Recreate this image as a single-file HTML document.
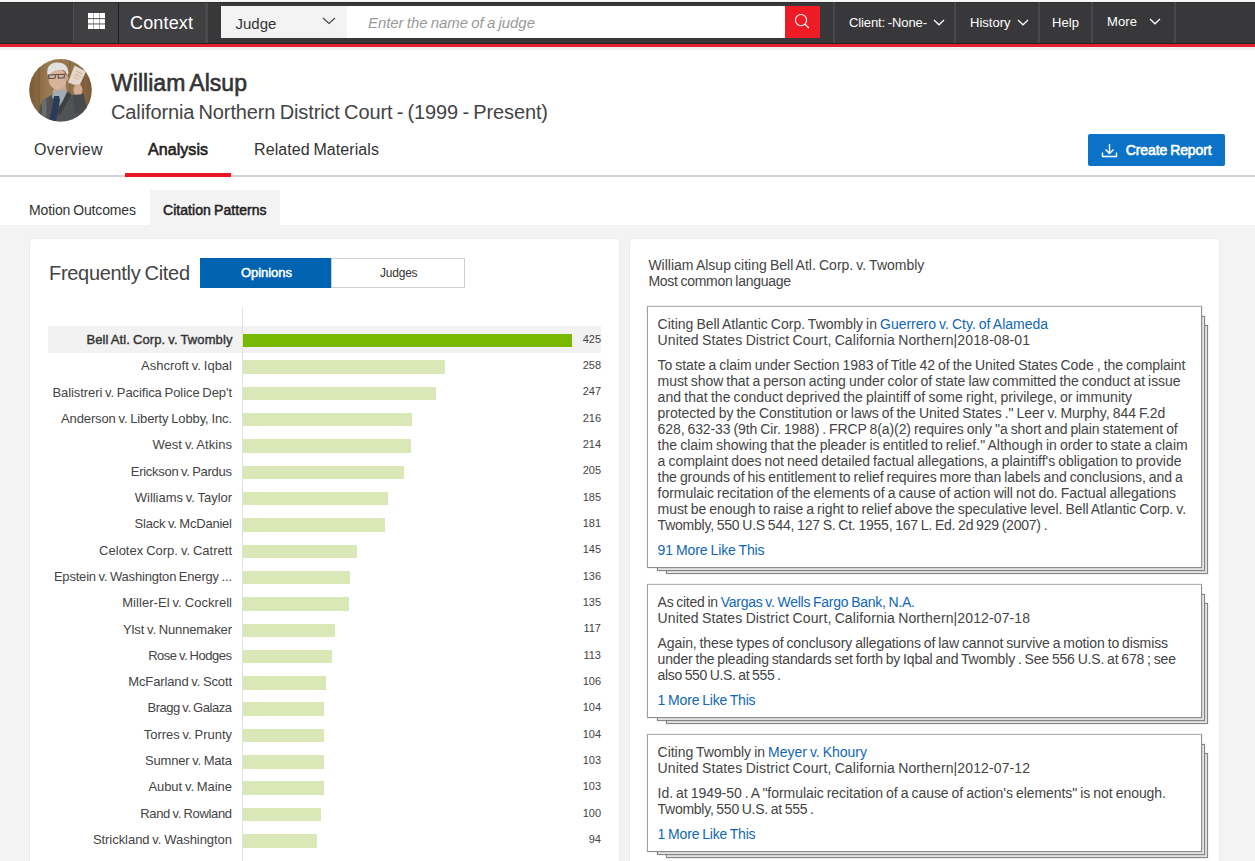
<!DOCTYPE html>
<html><head><meta charset="utf-8">
<style>
html,body{margin:0;padding:0;}
body{width:1255px;height:861px;overflow:hidden;position:relative;background:#fff;font-family:"Liberation Sans",sans-serif;}
.a{position:absolute;}
.t{position:absolute;white-space:nowrap;}
.bar{position:absolute;left:243px;height:13.5px;}
.sep{position:absolute;top:2px;width:2px;height:41px;background:#48484a;}
.card{position:absolute;background:#fff;border:1px solid #ebebeb;border-radius:4px;}
.cc{position:absolute;background:#fff;border:1px solid #8e8e8e;border-top-color:#b0b0b0;border-left-color:#a0a0a0;box-shadow:0 0 1px rgba(0,0,0,.3);}
.ly{position:absolute;background:#e2e2e2;border:1px solid #858585;box-shadow:0 0 1px rgba(0,0,0,.3);}
</style></head><body>
<!-- header -->
<div class="a" style="left:0;top:0;width:1255px;height:2px;background:#f6f6f6"></div>
<div class="a" style="left:0;top:2px;width:1255px;height:41px;background:#38383a"></div>
<div class="a" style="left:0;top:43px;width:1255px;height:1px;background:#222526"></div>
<div class="a" style="left:0;top:44px;width:1255px;height:3px;background:#e5202e"></div>
<div class="a" style="left:0;top:47px;width:1255px;height:3px;background:#f1f2f2"></div>
<div class="a" style="left:73px;top:2px;width:45px;height:41px;background:#404042;border-left:1px solid #4d4d4f"></div>
<div class="a" style="left:118px;top:2px;width:1px;height:41px;background:#1e1e1e"></div>
<div class="a" style="left:119px;top:2px;width:86px;height:41px;background:#404042"></div>
<div class="a" style="left:205px;top:2px;width:3px;height:41px;background:#4a4a4c"></div>
<div class="a" style="left:0;top:2px;width:1255px;height:1px;background:#2e2e30"></div>
<!-- grid icon -->
<svg class="a" style="left:88px;top:13px" width="17" height="16" viewBox="0 0 17 16">
<rect x="0" y="0" width="17" height="16" fill="#fff"/>
<rect x="5.3" y="0" width="0.6" height="16" fill="#404042" opacity=".7"/>
<rect x="11.1" y="0" width="0.6" height="16" fill="#404042" opacity=".7"/>
<rect x="0" y="5.2" width="17" height="0.9" fill="#404042"/>
<rect x="0" y="10.5" width="17" height="0.9" fill="#404042"/>
</svg>
<!-- select -->
<div class="a" style="left:221px;top:6px;width:126px;height:32px;background:#f3f3f3"></div>
<svg class="a" style="left:322px;top:17px" width="14" height="8" viewBox="0 0 14 8"><polyline points="1,1 7,6.5 13,1" fill="none" stroke="#444" stroke-width="1.1"/></svg>
<div class="a" style="left:347px;top:6px;width:438px;height:32px;background:#fff"></div>
<div class="a" style="left:785px;top:6px;width:35px;height:32px;background:#ec1b24"></div>
<svg class="a" style="left:793px;top:13px" width="18" height="18" viewBox="0 0 18 18"><circle cx="8" cy="7.1" r="5.6" fill="none" stroke="#fff" stroke-width="1.15"/><line x1="12" y1="11.1" x2="15.8" y2="15" stroke="#fff" stroke-width="1.2"/></svg>
<div class="sep" style="left:833px"></div>
<div class="sep" style="left:954px"></div>
<div class="sep" style="left:1038px"></div>
<div class="sep" style="left:1091px"></div>
<div class="sep" style="left:1174px"></div>
<svg class="a" style="left:933px;top:19px" width="12" height="7" viewBox="0 0 12 7"><polyline points="1,1 6,5.8 11,1" fill="none" stroke="#fff" stroke-width="1.2"/></svg>
<svg class="a" style="left:1017px;top:19px" width="12" height="7" viewBox="0 0 12 7"><polyline points="1,1 6,5.8 11,1" fill="none" stroke="#fff" stroke-width="1.2"/></svg>
<svg class="a" style="left:1149px;top:18px" width="12" height="7" viewBox="0 0 12 7"><polyline points="1,1 6,5.8 11,1" fill="none" stroke="#fff" stroke-width="1.2"/></svg>

<!-- profile photo -->
<svg class="a" style="left:29px;top:59px" width="63" height="63" viewBox="0 0 63 63">
<defs><clipPath id="cp"><circle cx="31.5" cy="31.3" r="31.3"/></clipPath>
<linearGradient id="bg" x1="0" y1="0" x2="1" y2="0"><stop offset="0" stop-color="#7a5a36"/><stop offset="0.3" stop-color="#9a7a50"/><stop offset="0.7" stop-color="#94744b"/><stop offset="1" stop-color="#7a5a38"/></linearGradient>
<filter id="bl" x="-10%" y="-10%" width="120%" height="120%"><feGaussianBlur stdDeviation="0.7"/></filter></defs>
<g clip-path="url(#cp)">
<rect width="63" height="63" fill="url(#bg)"/>
<g filter="url(#bl)">
<rect x="9" y="0" width="2" height="63" fill="#6a4c2e" opacity=".35"/>
<rect x="40" y="0" width="2" height="63" fill="#6a4c2e" opacity=".3"/>
<rect x="52" y="0" width="3" height="63" fill="#6a4c2e" opacity=".3"/>
<!-- suit -->
<path d="M9 63 L11 47 Q14 40 21 37 L27 33 L38 32 Q44 36 48 40 L53 38 L58 46 L58 63 Z" fill="#505255"/>
<!-- shirt collar -->
<path d="M24 31 L37 29 L39 36 L30 47 L23 38 Z" fill="#a3abb2"/>
<!-- tie -->
<path d="M25 37 L30 37 L31 41 L27 63 L20 63 L24 44 Z" fill="#2b3a58"/>
<!-- lapel shadow -->
<path d="M38 33 L42 36 L31 56 L28 54 Z" fill="#3e4043"/>
<!-- mic -->
<rect x="13" y="40" width="4.5" height="18" rx="2" fill="#6a6c6e"/>
<!-- neck -->
<path d="M25 24 L37 24 L37 31 L25 32 Z" fill="#c8a48e"/>
<!-- face -->
<ellipse cx="28.5" cy="20" rx="9" ry="10.5" fill="#d7b39c"/>
<ellipse cx="37" cy="19" rx="2" ry="3" fill="#cda690"/>
<!-- hair -->
<path d="M18.5 17 Q16.5 4 28 3.5 Q39 3 39.5 14 L38 16 Q37 10 30 11 Q22 11 20.5 17 Z" fill="#e2e2e0"/>
<!-- glasses -->
<path d="M18.5 16 L36.5 15.3 M19.5 16 L20 19.5 L26 19.3 L26.5 16 M29 15.8 L29.5 19.2 L35 18.8 L35.5 15.5" fill="none" stroke="#3e3a3c" stroke-width="1.1" opacity=".9"/>
<!-- card -->
<path d="M45.5 6.5 L57 12.5 L50 27.5 L39 23.5 Z" fill="#e2d8cc"/>
<path d="M47 12 L53 15 M46 15 L52 18 M45 18 L50 20.5" stroke="#d89a6a" stroke-width="1" opacity=".7"/>
<!-- hand and sleeve -->
<ellipse cx="49" cy="31" rx="4.5" ry="6" fill="#d3ad96"/>
<path d="M44 36 L55 35 L58 55 L46 55 Z" fill="#47494c"/>
</g>
</g></svg>

<!-- tabs -->
<div class="a" style="left:0;top:175px;width:1255px;height:2px;background:#d2d2d2"></div>
<div class="a" style="left:125px;top:173px;width:106px;height:4px;background:#ec1620"></div>
<div class="a" style="left:1088px;top:134px;width:137px;height:32px;background:#0b73c7;border-radius:2px"></div>
<svg class="a" style="left:1101px;top:143px" width="17" height="15" viewBox="0 0 17 15">
<path d="M8.5 1 V10 M4.5 6.5 L8.5 10.5 L12.5 6.5" fill="none" stroke="#fff" stroke-width="1.4"/>
<path d="M1.5 9.5 V13.5 H15.5 V9.5" fill="none" stroke="#fff" stroke-width="1.4"/>
</svg>
<!-- subtabs -->
<div class="a" style="left:0;top:177px;width:1255px;height:48px;background:#fff"></div>
<div class="a" style="left:150px;top:190px;width:130px;height:35px;background:#f3f3f3"></div>
<!-- body -->
<div class="a" style="left:0;top:225px;width:1255px;height:636px;background:#f3f3f3"></div>
<div class="card" style="left:29px;top:238px;width:589px;height:700px"></div>
<div class="card" style="left:629px;top:238px;width:589px;height:700px"></div>

<!-- left card content -->
<div class="a" style="left:200px;top:258px;width:131px;height:30px;background:#0063b1"></div>
<div class="a" style="left:331px;top:258px;width:132px;height:28px;background:#fff;border:1px solid #cfcfcf"></div>
<div class="a" style="left:48px;top:326px;width:553px;height:27px;background:#f2f2f2"></div>
<div class="a" style="left:242px;top:307px;width:1px;height:560px;background:#e2e2e2"></div>
<div class="bar" style="top:334.00px;width:329.0px;height:12.7px;background:#76b900"></div>
<div class="bar" style="top:360.32px;width:202.0px;height:13.5px;background:#d9e8b6"></div>
<div class="bar" style="top:386.64px;width:193.4px;height:13.5px;background:#d9e8b6"></div>
<div class="bar" style="top:412.96px;width:169.1px;height:13.5px;background:#d9e8b6"></div>
<div class="bar" style="top:439.28px;width:167.6px;height:13.5px;background:#d9e8b6"></div>
<div class="bar" style="top:465.60px;width:160.5px;height:13.5px;background:#d9e8b6"></div>
<div class="bar" style="top:491.92px;width:144.9px;height:13.5px;background:#d9e8b6"></div>
<div class="bar" style="top:518.24px;width:141.7px;height:13.5px;background:#d9e8b6"></div>
<div class="bar" style="top:544.56px;width:113.5px;height:13.5px;background:#d9e8b6"></div>
<div class="bar" style="top:570.88px;width:106.5px;height:13.5px;background:#d9e8b6"></div>
<div class="bar" style="top:597.20px;width:105.7px;height:13.5px;background:#d9e8b6"></div>
<div class="bar" style="top:623.52px;width:91.6px;height:13.5px;background:#d9e8b6"></div>
<div class="bar" style="top:649.84px;width:88.5px;height:13.5px;background:#d9e8b6"></div>
<div class="bar" style="top:676.16px;width:83.0px;height:13.5px;background:#d9e8b6"></div>
<div class="bar" style="top:702.48px;width:81.4px;height:13.5px;background:#d9e8b6"></div>
<div class="bar" style="top:728.80px;width:81.4px;height:13.5px;background:#d9e8b6"></div>
<div class="bar" style="top:755.12px;width:80.6px;height:13.5px;background:#d9e8b6"></div>
<div class="bar" style="top:781.44px;width:80.6px;height:13.5px;background:#d9e8b6"></div>
<div class="bar" style="top:807.76px;width:78.3px;height:13.5px;background:#d9e8b6"></div>
<div class="bar" style="top:834.08px;width:73.6px;height:13.5px;background:#d9e8b6"></div>

<!-- right card: citation stacks -->
<div class="ly" style="left:666px;top:325px;width:540px;height:247px"></div>
<div class="ly" style="left:657px;top:316px;width:546px;height:253px"></div>
<div class="cc" style="left:647px;top:306px;width:553px;height:260px"></div>

<div class="ly" style="left:666px;top:603px;width:540px;height:119px"></div>
<div class="ly" style="left:657px;top:594px;width:546px;height:125px"></div>
<div class="cc" style="left:647px;top:584px;width:553px;height:132px"></div>

<div class="ly" style="left:666px;top:753px;width:540px;height:103px"></div>
<div class="ly" style="left:657px;top:744px;width:546px;height:109px"></div>
<div class="cc" style="left:647px;top:734px;width:553px;height:116px"></div>

<div class="t" style="top:12.00px;font-size:18px;line-height:22px;color:#fff;word-spacing:-0.99px;letter-spacing:0.159px;left:130.00px;">Context</div>
<div class="t" style="top:14.00px;font-size:15px;line-height:19px;color:#333;word-spacing:-0.82px;letter-spacing:0.031px;left:235.40px;">Judge</div>
<div class="t" style="top:13.00px;font-size:15px;line-height:19px;color:#9a9a9a;word-spacing:-0.82px;font-style:italic;letter-spacing:-0.064px;left:368.00px;">Enter the name of a judge</div>
<div class="t" style="top:15.00px;font-size:13px;line-height:16px;color:#fff;word-spacing:-0.71px;letter-spacing:-0.115px;left:849.00px;">Client: -None-</div>
<div class="t" style="top:15.00px;font-size:13px;line-height:16px;color:#fff;word-spacing:-0.71px;letter-spacing:0.024px;left:970.00px;">History</div>
<div class="t" style="top:15.00px;font-size:13px;line-height:16px;color:#fff;word-spacing:-0.71px;letter-spacing:0.083px;left:1052.00px;">Help</div>
<div class="t" style="top:14.00px;font-size:13px;line-height:16px;color:#fff;word-spacing:-0.71px;letter-spacing:0.125px;left:1107.00px;">More</div>
<div class="t" style="top:69.00px;font-size:23px;line-height:29px;color:#333;word-spacing:-1.26px;-webkit-text-stroke:0.6px #333;letter-spacing:0.042px;left:111.00px;">William Alsup</div>
<div class="t" style="top:100.00px;font-size:20px;line-height:25px;color:#444;word-spacing:-1.1px;letter-spacing:-0.126px;left:111.00px;">California Northern District Court - (1999 - Present)</div>
<div class="t" style="top:140.00px;font-size:16px;line-height:20px;color:#333;word-spacing:-0.88px;letter-spacing:0.273px;left:34.00px;">Overview</div>
<div class="t" style="top:140.00px;font-size:16px;line-height:20px;color:#222;word-spacing:-0.88px;-webkit-text-stroke:0.6px #222;letter-spacing:0.060px;left:148.00px;">Analysis</div>
<div class="t" style="top:140.00px;font-size:16px;line-height:20px;color:#333;word-spacing:-0.88px;letter-spacing:0.086px;left:254.00px;">Related Materials</div>
<div class="t" style="top:141.00px;font-size:14px;line-height:18px;color:#fff;word-spacing:-0.77px;-webkit-text-stroke:0.6px #fff;letter-spacing:-0.098px;left:1125.70px;">Create Report</div>
<div class="t" style="top:201.00px;font-size:14px;line-height:18px;color:#333;word-spacing:-0.77px;letter-spacing:-0.140px;left:29.00px;">Motion Outcomes</div>
<div class="t" style="top:201.00px;font-size:14px;line-height:18px;color:#222;word-spacing:-0.77px;-webkit-text-stroke:0.5px #222;letter-spacing:0.054px;left:163.00px;">Citation Patterns</div>
<div class="t" style="top:261.00px;font-size:20px;line-height:25px;color:#444;word-spacing:-1.1px;letter-spacing:-0.309px;left:49.00px;">Frequently Cited</div>
<div class="t" style="top:265.00px;font-size:13px;line-height:16px;color:#fff;word-spacing:-0.71px;-webkit-text-stroke:0.5px #fff;letter-spacing:-0.045px;left:241.00px;">Opinions</div>
<div class="t" style="top:266.00px;font-size:12px;line-height:15px;color:#333;word-spacing:-0.66px;letter-spacing:-0.221px;left:380.00px;">Judges</div>
<div class="t" style="top:332.00px;font-size:13px;line-height:16px;color:#333;word-spacing:-0.71px;-webkit-text-stroke:0.4px #333;letter-spacing:0.106px;right:1022.49px;">Bell Atl. Corp. v. Twombly</div>
<div class="t" style="top:332.00px;font-size:11px;line-height:14px;color:#444;word-spacing:-0.6px;right:654.00px;">425</div>
<div class="t" style="top:358.00px;font-size:13px;line-height:16px;color:#444;word-spacing:-0.71px;letter-spacing:0.011px;right:1022.99px;">Ashcroft v. Iqbal</div>
<div class="t" style="top:358.00px;font-size:11px;line-height:14px;color:#444;word-spacing:-0.6px;right:654.00px;">258</div>
<div class="t" style="top:385.00px;font-size:13px;line-height:16px;color:#444;word-spacing:-0.71px;letter-spacing:-0.077px;right:1023.08px;">Balistreri v. Pacifica Police Dep't</div>
<div class="t" style="top:384.00px;font-size:11px;line-height:14px;color:#444;word-spacing:-0.6px;right:654.00px;">247</div>
<div class="t" style="top:411.00px;font-size:13px;line-height:16px;color:#444;word-spacing:-0.71px;letter-spacing:-0.115px;right:1023.12px;">Anderson v. Liberty Lobby, Inc.</div>
<div class="t" style="top:411.00px;font-size:11px;line-height:14px;color:#444;word-spacing:-0.6px;right:654.00px;">216</div>
<div class="t" style="top:437.00px;font-size:13px;line-height:16px;color:#444;word-spacing:-0.71px;letter-spacing:0.045px;right:1022.96px;">West v. Atkins</div>
<div class="t" style="top:437.00px;font-size:11px;line-height:14px;color:#444;word-spacing:-0.6px;right:654.00px;">214</div>
<div class="t" style="top:464.00px;font-size:13px;line-height:16px;color:#444;word-spacing:-0.71px;letter-spacing:-0.282px;right:1023.28px;">Erickson v. Pardus</div>
<div class="t" style="top:463.00px;font-size:11px;line-height:14px;color:#444;word-spacing:-0.6px;right:654.00px;">205</div>
<div class="t" style="top:490.00px;font-size:13px;line-height:16px;color:#444;word-spacing:-0.71px;letter-spacing:-0.034px;right:1023.03px;">Williams v. Taylor</div>
<div class="t" style="top:490.00px;font-size:11px;line-height:14px;color:#444;word-spacing:-0.6px;right:654.00px;">185</div>
<div class="t" style="top:516.00px;font-size:13px;line-height:16px;color:#444;word-spacing:-0.71px;letter-spacing:-0.215px;right:1023.21px;">Slack v. McDaniel</div>
<div class="t" style="top:516.00px;font-size:11px;line-height:14px;color:#444;word-spacing:-0.6px;right:654.00px;">181</div>
<div class="t" style="top:543.00px;font-size:13px;line-height:16px;color:#444;word-spacing:-0.71px;letter-spacing:0.007px;right:1022.99px;">Celotex Corp. v. Catrett</div>
<div class="t" style="top:542.00px;font-size:11px;line-height:14px;color:#444;word-spacing:-0.6px;right:654.00px;">145</div>
<div class="t" style="top:569.00px;font-size:13px;line-height:16px;color:#444;word-spacing:-0.71px;letter-spacing:-0.200px;right:1023.20px;">Epstein v. Washington Energy ...</div>
<div class="t" style="top:569.00px;font-size:11px;line-height:14px;color:#444;word-spacing:-0.6px;right:654.00px;">136</div>
<div class="t" style="top:595.00px;font-size:13px;line-height:16px;color:#444;word-spacing:-0.71px;letter-spacing:0.047px;right:1022.95px;">Miller-El v. Cockrell</div>
<div class="t" style="top:595.00px;font-size:11px;line-height:14px;color:#444;word-spacing:-0.6px;right:654.00px;">135</div>
<div class="t" style="top:622.00px;font-size:13px;line-height:16px;color:#444;word-spacing:-0.71px;letter-spacing:-0.121px;right:1023.12px;">Ylst v. Nunnemaker</div>
<div class="t" style="top:621.00px;font-size:11px;line-height:14px;color:#444;word-spacing:-0.6px;right:654.00px;">117</div>
<div class="t" style="top:648.00px;font-size:13px;line-height:16px;color:#444;word-spacing:-0.71px;letter-spacing:-0.485px;right:1023.49px;">Rose v. Hodges</div>
<div class="t" style="top:648.00px;font-size:11px;line-height:14px;color:#444;word-spacing:-0.6px;right:654.00px;">113</div>
<div class="t" style="top:674.00px;font-size:13px;line-height:16px;color:#444;word-spacing:-0.71px;letter-spacing:-0.134px;right:1023.13px;">McFarland v. Scott</div>
<div class="t" style="top:674.00px;font-size:11px;line-height:14px;color:#444;word-spacing:-0.6px;right:654.00px;">106</div>
<div class="t" style="top:700.00px;font-size:13px;line-height:16px;color:#444;word-spacing:-0.71px;letter-spacing:-0.446px;right:1023.45px;">Bragg v. Galaza</div>
<div class="t" style="top:700.00px;font-size:11px;line-height:14px;color:#444;word-spacing:-0.6px;right:654.00px;">104</div>
<div class="t" style="top:727.00px;font-size:13px;line-height:16px;color:#444;word-spacing:-0.71px;letter-spacing:-0.029px;right:1023.03px;">Torres v. Prunty</div>
<div class="t" style="top:727.00px;font-size:11px;line-height:14px;color:#444;word-spacing:-0.6px;right:654.00px;">104</div>
<div class="t" style="top:753.00px;font-size:13px;line-height:16px;color:#444;word-spacing:-0.71px;letter-spacing:-0.183px;right:1023.18px;">Sumner v. Mata</div>
<div class="t" style="top:753.00px;font-size:11px;line-height:14px;color:#444;word-spacing:-0.6px;right:654.00px;">103</div>
<div class="t" style="top:779.00px;font-size:13px;line-height:16px;color:#444;word-spacing:-0.71px;letter-spacing:-0.057px;right:1023.06px;">Aubut v. Maine</div>
<div class="t" style="top:779.00px;font-size:11px;line-height:14px;color:#444;word-spacing:-0.6px;right:654.00px;">103</div>
<div class="t" style="top:806.00px;font-size:13px;line-height:16px;color:#444;word-spacing:-0.71px;letter-spacing:-0.345px;right:1023.34px;">Rand v. Rowland</div>
<div class="t" style="top:806.00px;font-size:11px;line-height:14px;color:#444;word-spacing:-0.6px;right:654.00px;">100</div>
<div class="t" style="top:832.00px;font-size:13px;line-height:16px;color:#444;word-spacing:-0.71px;letter-spacing:-0.048px;right:1023.05px;">Strickland v. Washington</div>
<div class="t" style="top:832.00px;font-size:11px;line-height:14px;color:#444;word-spacing:-0.6px;right:654.00px;">94</div>
<div class="t" style="top:256.00px;font-size:14px;line-height:18px;color:#444;word-spacing:-0.77px;letter-spacing:0.005px;left:648.40px;">William Alsup citing Bell Atl. Corp. v. Twombly</div>
<div class="t" style="top:272.00px;font-size:14px;line-height:18px;color:#444;word-spacing:-0.77px;letter-spacing:-0.278px;left:648.40px;">Most common language</div>
<div class="t" style="top:315.00px;font-size:14px;line-height:18px;color:#444;word-spacing:-0.77px;letter-spacing:-0.017px;left:657.60px;">Citing Bell Atlantic Corp. Twombly in <span style="color:#0f67b6">Guerrero v. Cty. of Alameda</span></div>
<div class="t" style="top:331.00px;font-size:14px;line-height:18px;color:#444;word-spacing:-0.77px;letter-spacing:0.117px;left:657.60px;">United States District Court, California Northern|2018-08-01</div>
<div class="t" style="top:356.00px;font-size:14px;line-height:18px;color:#444;word-spacing:-0.77px;letter-spacing:-0.061px;left:657.60px;">To state a claim under Section 1983 of Title 42 of the United States Code , the complaint</div>
<div class="t" style="top:372.00px;font-size:14px;line-height:18px;color:#444;word-spacing:-0.77px;letter-spacing:-0.056px;left:657.60px;">must show that a person acting under color of state law committed the conduct at issue</div>
<div class="t" style="top:388.00px;font-size:14px;line-height:18px;color:#444;word-spacing:-0.77px;letter-spacing:0.037px;left:657.60px;">and that the conduct deprived the plaintiff of some right, privilege, or immunity</div>
<div class="t" style="top:404.00px;font-size:14px;line-height:18px;color:#444;word-spacing:-0.77px;letter-spacing:-0.040px;left:657.60px;">protected by the Constitution or laws of the United States ." Leer v. Murphy, 844 F.2d</div>
<div class="t" style="top:420.00px;font-size:14px;line-height:18px;color:#444;word-spacing:-0.77px;letter-spacing:-0.097px;left:657.60px;">628, 632-33 (9th Cir. 1988) . FRCP 8(a)(2) requires only "a short and plain statement of</div>
<div class="t" style="top:436.00px;font-size:14px;line-height:18px;color:#444;word-spacing:-0.77px;letter-spacing:0.005px;left:657.60px;">the claim showing that the pleader is entitled to relief." Although in order to state a claim</div>
<div class="t" style="top:452.00px;font-size:14px;line-height:18px;color:#444;word-spacing:-0.77px;letter-spacing:-0.027px;left:657.60px;">a complaint does not need detailed factual allegations, a plaintiff's obligation to provide</div>
<div class="t" style="top:468.00px;font-size:14px;line-height:18px;color:#444;word-spacing:-0.77px;letter-spacing:-0.073px;left:657.60px;">the grounds of his entitlement to relief requires more than labels and conclusions, and a</div>
<div class="t" style="top:484.00px;font-size:14px;line-height:18px;color:#444;word-spacing:-0.77px;letter-spacing:-0.044px;left:657.60px;">formulaic recitation of the elements of a cause of action will not do. Factual allegations</div>
<div class="t" style="top:500.00px;font-size:14px;line-height:18px;color:#444;word-spacing:-0.77px;letter-spacing:-0.066px;left:657.60px;">must be enough to raise a right to relief above the speculative level. Bell Atlantic Corp. v.</div>
<div class="t" style="top:516.00px;font-size:14px;line-height:18px;color:#444;word-spacing:-0.77px;letter-spacing:-0.228px;left:657.60px;">Twombly, 550 U.S 544, 127 S. Ct. 1955, 167 L. Ed. 2d 929 (2007) .</div>
<div class="t" style="top:541.00px;font-size:14px;line-height:18px;color:#0f67b6;word-spacing:-0.77px;letter-spacing:-0.107px;left:657.60px;">91 More Like This</div>
<div class="t" style="top:593.00px;font-size:14px;line-height:18px;color:#444;word-spacing:-0.77px;letter-spacing:-0.259px;left:657.60px;">As cited in <span style="color:#0f67b6">Vargas v. Wells Fargo Bank, N.A.</span></div>
<div class="t" style="top:609.00px;font-size:14px;line-height:18px;color:#444;word-spacing:-0.77px;letter-spacing:0.117px;left:657.60px;">United States District Court, California Northern|2012-07-18</div>
<div class="t" style="top:634.00px;font-size:14px;line-height:18px;color:#444;word-spacing:-0.77px;letter-spacing:-0.121px;left:657.60px;">Again, these types of conclusory allegations of law cannot survive a motion to dismiss</div>
<div class="t" style="top:650.00px;font-size:14px;line-height:18px;color:#444;word-spacing:-0.77px;letter-spacing:-0.179px;left:657.60px;">under the pleading standards set forth by Iqbal and Twombly . See 556 U.S. at 678 ; see</div>
<div class="t" style="top:666.00px;font-size:14px;line-height:18px;color:#444;word-spacing:-0.77px;letter-spacing:-0.352px;left:657.60px;">also 550 U.S. at 555 .</div>
<div class="t" style="top:691.00px;font-size:14px;line-height:18px;color:#0f67b6;word-spacing:-0.77px;letter-spacing:-0.195px;left:657.60px;">1 More Like This</div>
<div class="t" style="top:743.00px;font-size:14px;line-height:18px;color:#444;word-spacing:-0.77px;letter-spacing:-0.031px;left:657.60px;">Citing Twombly in <span style="color:#0f67b6">Meyer v. Khoury</span></div>
<div class="t" style="top:759.00px;font-size:14px;line-height:18px;color:#444;word-spacing:-0.77px;letter-spacing:0.117px;left:657.60px;">United States District Court, California Northern|2012-07-12</div>
<div class="t" style="top:784.00px;font-size:14px;line-height:18px;color:#444;word-spacing:-0.77px;letter-spacing:-0.055px;left:657.60px;">Id. at 1949-50 . A "formulaic recitation of a cause of action's elements" is not enough.</div>
<div class="t" style="top:800.00px;font-size:14px;line-height:18px;color:#444;word-spacing:-0.77px;letter-spacing:-0.272px;left:657.60px;">Twombly, 550 U.S. at 555 .</div>
<div class="t" style="top:825.00px;font-size:14px;line-height:18px;color:#0f67b6;word-spacing:-0.77px;letter-spacing:-0.195px;left:657.60px;">1 More Like This</div>
</body></html>
